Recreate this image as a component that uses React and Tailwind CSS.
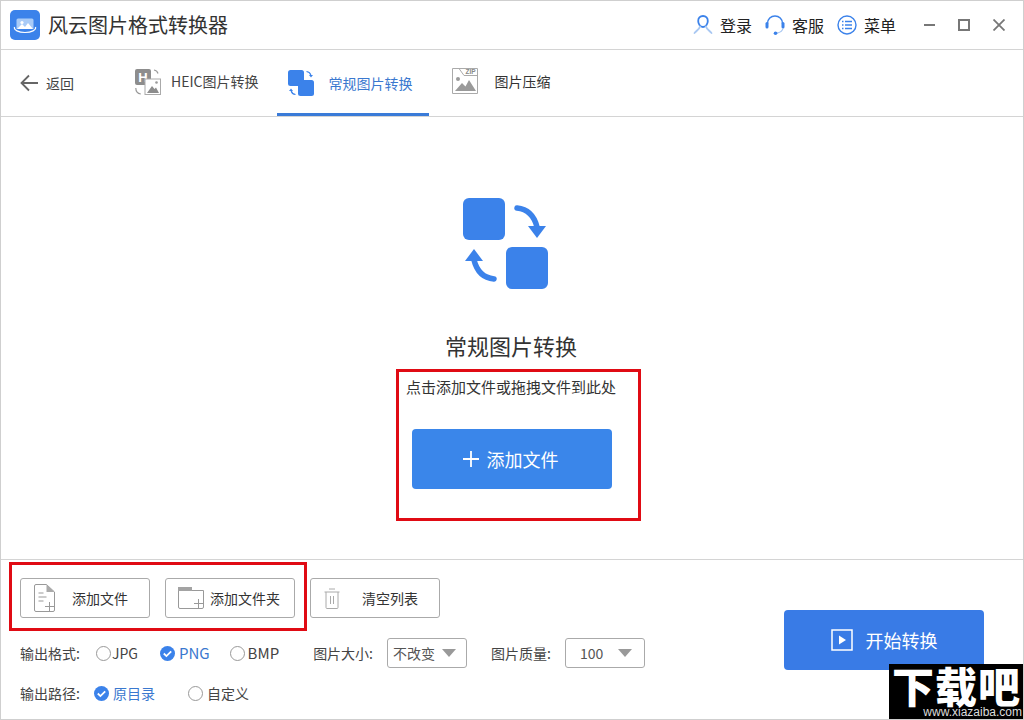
const blue = "#3b82ea";

function Logo() {
  return (
    <svg width="30" height="30" viewBox="0 0 30 30">
      <rect width="30" height="30" rx="5" fill={blue} />
      <path d="M8 8.500h14a1.500 1.500 0 0 1 1.500 1.500v9h-17v-9A1.500 1.500 0 0 1 8 8.500z" fill="#a9cbf7" />
      <circle cx="12" cy="12.500" r="1.600" fill="#fff" />
      <path d="M7 19l5-5 3 3 3-4 5 6z" fill="#fff" />
      <path d="M4.500 17c-1 3 4 5.500 10.500 5.500S26.500 20 25.500 17" fill="none" stroke="#fff" strokeWidth="1.200" />
    </svg>
  );
}

function UserIcon() {
  return (
    <svg width="20" height="22" viewBox="0 0 20 22" fill="none" strokeWidth="1.800" strokeLinecap="round">
      <path d="M10 2c-3 0-4.800 2.200-4.800 5S7 13 10 13s4.800-3.200 4.800-6S13 2 10 2z" stroke="#3b82ea" />
      <path d="M7 12.500c-.5 2.500-3 3.800-5.500 6.500M13 12.500c.5 2.500 3 3.800 5.500 6.500" stroke="#a9c8f2" />
    </svg>
  );
}

function HeadsetIcon() {
  return (
    <svg width="20" height="22" viewBox="0 0 20 22" fill="none">
      <path d="M2.500 9.500C2.500 5 6 2 10 2s7.500 3 7.500 7.500" stroke="#3b82ea" strokeWidth="1.500" />
      <rect x="0.500" y="8" width="3" height="6.500" rx="1.500" fill="#3b82ea" />
      <rect x="16.500" y="8" width="3" height="6.500" rx="1.500" fill="#3b82ea" />
      <path d="M18 14c-.5 3-3 4.500-6 5" stroke="#a9c8f2" strokeWidth="1.300" />
      <circle cx="10.500" cy="19.300" r="1.800" fill="#3b82ea" />
    </svg>
  );
}

function MenuIcon() {
  return (
    <svg width="20" height="20" viewBox="0 0 20 20" fill="none" stroke="#3b82ea">
      <circle cx="10" cy="10" r="9" strokeWidth="1.400" />
      <path d="M8 6.500h7M8 10h7M8 13.500h7M5 6.500h1.500M5 10h1.500M5 13.500h1.500" strokeWidth="1.500" />
    </svg>
  );
}

function BackArrow() {
  return (
    <svg width="18" height="18" viewBox="0 0 18 18" fill="none" stroke="#666" strokeWidth="1.800">
      <path d="M18 9H1.500M9 1.500L1.500 9 9 16.500" />
    </svg>
  );
}

function HeicIcon() {
  return (
    <svg width="26" height="26" viewBox="0 0 26 26" fill="none">
      <rect x="0" y="0" width="16" height="16" rx="2" fill="#8d8d8d" />
      <text x="8" y="13" textAnchor="middle" fontSize="13" fontWeight="700" fill="#fff" fontFamily="Liberation Sans, sans-serif">H</text>
      <path d="M19 1c2 .3 3.500 1.500 4 3.500M.8 19c0 3 1.500 5.500 5 6" stroke="#999" strokeWidth="1.200" />
      <rect x="10" y="10" width="15.500" height="15.500" stroke="#aaa" strokeWidth="1" fill="#fff" />
      <path d="M12 24l5-7 2.500 3 1.500-1.500 3 5.500z" fill="#8d8d8d" />
      <circle cx="21.500" cy="13.500" r="1.300" fill="#999" />
    </svg>
  );
}

function RegularIcon() {
  return (
    <svg width="26" height="26" viewBox="0 0 26 26" fill="none">
      <rect x="0" y="0" width="16" height="16" rx="2.500" fill={blue} />
      <rect x="10" y="10" width="16" height="16" rx="2.500" fill={blue} />
      <path d="M18.500 1.500c2 .3 3.800 1.500 4.300 3.500" stroke={blue} strokeWidth="1.200" />
      <path d="M21 5h4l-2 2.500z" fill={blue} />
      <path d="M7.500 24.500c-2-.3-3.800-1.500-4.300-3.500" stroke={blue} strokeWidth="1.200" />
      <path d="M1 21h4l-2-2.500z" fill={blue} />
    </svg>
  );
}

function ZipIcon() {
  return (
    <svg width="26" height="26" viewBox="0 0 26 26" fill="none">
      <path d="M.5.500h25v25H.5z" stroke="#aaa" fill="#fff" />
      <path d="M7 .500l5 7h13.500" stroke="#aaa" />
      <text x="18.500" y="6.300" textAnchor="middle" fontSize="6.500" fontWeight="700" fill="#888" fontFamily="Liberation Sans, sans-serif">ZIP</text>
      <circle cx="6" cy="11" r="2" fill="#9a9a9a" />
      <path d="M3 23l7-8 3.500 3.500L17 12l7 11z" fill="#9a9a9a" />
    </svg>
  );
}

function ConvertIcon() {
  return (
    <svg width="100" height="91" viewBox="0 0 100 91" fill="none">
      <rect x="1" y="0" width="42" height="42" rx="6" fill={blue} />
      <rect x="44" y="49" width="42" height="42" rx="6" fill={blue} />
      <path d="M55 10c10 1 17 7 20 19" stroke={blue} strokeWidth="5.500" strokeLinecap="round" />
      <path d="M66 28h18l-9 12z" fill={blue} />
      <path d="M32 81c-10-1-17-7-20-19" stroke={blue} strokeWidth="5.500" strokeLinecap="round" />
      <path d="M3 63h18l-9-12z" fill={blue} />
    </svg>
  );
}

function FileIcon() {
  return (
    <svg width="22" height="28" viewBox="0 0 22 28" fill="none" stroke="#999">
      <path d="M12.500.500H2A1.500 1.500 0 0 0 .5 2v24A1.500 1.500 0 0 0 2 27.500h17a1.500 1.500 0 0 0 1.500-1.500V8z" fill="#fff" />
      <path d="M12.500.500L20.500 8h-8z" fill="#aaa" stroke="none" />
      <path d="M4.500 9h5M4.500 13h8M4.500 17h5M11 22.500h9M15.500 18v9" />
    </svg>
  );
}

function FolderIcon() {
  return (
    <svg width="26" height="22" viewBox="0 0 26 22" fill="none" stroke="#999">
      <path d="M.5 3.500h25V20a1.500 1.500 0 0 1-1.500 1.500H2A1.500 1.500 0 0 1 .5 20z" fill="#fff" />
      <path d="M0 0h14v4H0z" fill="#a3a3a3" stroke="none" />
      <path d="M16 16.500h9M20.500 12v9" />
    </svg>
  );
}

function TrashIcon() {
  return (
    <svg width="16" height="21" viewBox="0 0 16 21" fill="none" stroke="#aaa">
      <path d="M.5 4h15M5 1h6M2 4v15.500a1 1 0 0 0 1 1h10a1 1 0 0 0 1-1V4M6.500 8v8M9.500 8v8" />
    </svg>
  );
}

function Radio({ checked }) {
  if (checked) {
    return (
      <svg width="15" height="15" viewBox="0 0 15 15" className="shrink-0">
        <circle cx="7.500" cy="7.500" r="7.500" fill={blue} />
        <path d="M3.800 7.500l2.600 2.600 4.800-4.800" fill="none" stroke="#fff" strokeWidth="1.800" />
      </svg>
    );
  }
  return <div className="h-[15px] w-[15px] shrink-0 rounded-full border border-[#999] bg-white" />;
}

function ToolButton({ icon, label, textLeft, iconLeft }) {
  return (
    <div className="flex h-10 w-[130px] items-center rounded-[3px] border border-[#aaa] bg-white text-[14px] text-[#333]">
      <span className={iconLeft}>{icon}</span>
      <span className={textLeft}>{label}</span>
    </div>
  );
}

function Select({ value, textClass, arrowClass }) {
  return (
    <div className="flex h-[30px] w-20 items-center rounded-[3px] border border-[#aaa] bg-white text-[14px] text-[#555]">
      <span className={textClass}>{value}</span>
      <span className={`h-0 w-0 border-x-[7px] border-t-[8px] border-x-transparent border-t-[#999] ${arrowClass}`} />
    </div>
  );
}

export default function App() {
  return (
    <div
      className="relative flex h-[720px] w-[1024px] flex-col overflow-hidden border border-[#cfcfcf] bg-white text-[#333]"
      style={{ fontFamily: '"Noto Sans CJK SC", "Liberation Sans", sans-serif' }}
    >
      {/* Title bar */}
      <div className="flex h-[49px] shrink-0 items-center border-b border-[#d4d4d4] pl-[9px]">
        <Logo />
        <span className="ml-2 text-[20px] text-[#333]">风云图片格式转换器</span>
        <div className="ml-auto flex items-center text-[16px] text-[#222]">
          <UserIcon />
          <span className="ml-[7px]">登录</span>
          <span className="ml-[13px]"><HeadsetIcon /></span>
          <span className="ml-[7px]">客服</span>
          <span className="ml-[13px]"><MenuIcon /></span>
          <span className="ml-[7px]">菜单</span>
          <span className="ml-[28px] h-0.5 w-[11px] bg-[#777]" />
          <span className="ml-[23px] h-[12px] w-[12px] border-2 border-[#777]" />
          <svg className="ml-[23px] mr-[18px]" width="12" height="12" viewBox="0 0 12 12" stroke="#777" strokeWidth="1.800">
            <path d="M.5.500l11 11M11.500.500l-11 11" />
          </svg>
        </div>
      </div>

      {/* Tabs */}
      <div className="flex h-[67px] shrink-0 items-center border-b border-[#d4d4d4] text-[14px]">
        <div className="ml-[19px] flex items-center text-[#444]">
          <BackArrow />
          <span className="ml-2">返回</span>
        </div>
        <div className="ml-[61px] flex items-center pb-[3px]">
          <HeicIcon />
          <span className="ml-[10px] text-[#444]">HEIC图片转换</span>
        </div>
        <div className="ml-[19px] flex h-full w-[152px] items-center border-b-[3px] border-[#3a7bd8] pl-[11px] pt-[3px]">
          <RegularIcon />
          <span className="ml-[14px] text-[#3a78cf]">常规图片转换</span>
        </div>
        <div className="ml-[23px] flex items-center pb-[4px]">
          <ZipIcon />
          <span className="ml-4 text-[#333]">图片压缩</span>
        </div>
      </div>

      {/* Drop area */}
      <div className="flex flex-1 flex-col items-center border-b border-[#d4d4d4] pt-[81px]">
        <ConvertIcon />
        <h1 className="mr-[2px] mt-[40px] text-[22px] font-normal leading-[32px] text-[#333]">常规图片转换</h1>
        <div className="ml-[13px] mt-[8px] flex h-[152px] w-[245px] flex-col border-[3px] border-[#e00b14]">
          <p className="ml-[7px] mt-[1px] text-[15px] leading-[28px] text-[#333]">点击添加文件或拖拽文件到此处</p>
          <button className="ml-[13px] mt-[28px] flex h-[60px] w-[200px] items-center justify-center gap-[7px] rounded-[4px] bg-[#3a86ea] pr-[4px] text-[18px] text-white">
            <svg width="18" height="18" viewBox="0 0 18 18" stroke="#fff" strokeWidth="1.800">
              <path d="M9 1v16M1 9h16" />
            </svg>
            添加文件
          </button>
        </div>
      </div>

      {/* Bottom controls */}
      <div className="flex h-[159px] shrink-0">
        <div className="w-[783px] pl-2 pt-[2px]">
          <div className="flex items-start">
            <div className="flex h-[69px] w-[298px] gap-[15px] border-[3px] border-[#e00b14] pl-2 pt-[13px]">
              <ToolButton icon={<FileIcon />} label="添加文件" iconLeft="ml-[13px]" textLeft="ml-4" />
              <ToolButton icon={<FolderIcon />} label="添加文件夹" iconLeft="ml-[12px]" textLeft="ml-[6px]" />
            </div>
            <div className="ml-[3px] mt-4">
              <ToolButton icon={<TrashIcon />} label="清空列表" iconLeft="ml-[13px]" textLeft="ml-[22px]" />
            </div>
          </div>

          <div className="ml-[11px] mt-[7px] flex h-[30px] items-center text-[14px] text-[#444]">
            <span>输出格式:</span>
            <span className="ml-4"><Radio /></span>
            <span className="ml-[1px]">JPG</span>
            <span className="ml-[22px]"><Radio checked /></span>
            <span className="ml-1 text-[15px] text-[#3a78cf]">PNG</span>
            <span className="ml-5"><Radio /></span>
            <span className="ml-[3px] text-[15px]">BMP</span>
            <span className="ml-[34px]">图片大小:</span>
            <span className="ml-[14px]"><Select value="不改变" textClass="ml-[5px]" arrowClass="ml-[7px]" /></span>
            <span className="ml-6">图片质量:</span>
            <span className="ml-[14px]"><Select value="100" textClass="ml-[14px]" arrowClass="ml-[15px]" /></span>
          </div>

          <div className="ml-[11px] mt-[10px] flex h-[30px] items-center text-[14px] text-[#444]">
            <span>输出路径:</span>
            <span className="ml-[14px]"><Radio checked /></span>
            <span className="ml-1 text-[#3a78cf]">原目录</span>
            <span className="ml-[33px]"><Radio /></span>
            <span className="ml-1">自定义</span>
          </div>
        </div>

        <div className="pt-[50px]">
          <button className="flex h-[60px] w-[200px] items-center justify-center gap-[13px] rounded-[4px] bg-[#397be6] text-[18px] text-white">
            <svg width="22" height="22" viewBox="0 0 22 22" fill="none">
              <rect x="1" y="1" width="20" height="20" stroke="#fff" strokeWidth="1.500" />
              <path d="M8 6.500l7 4.500-7 4.500z" fill="#fff" />
            </svg>
            开始转换
          </button>
        </div>
      </div>

      {/* Watermark */}
      <div className="absolute bottom-[-1px] right-[-1px] flex h-[56px] w-[135px] flex-col items-center bg-black text-white">
        <span className="text-[42px] font-black leading-[41px] tracking-[1px]">下载吧</span>
        <span className="self-end pr-[2px] text-[12px] leading-[14px] text-[#ddd]" style={{ fontFamily: '"Liberation Sans", sans-serif' }}>www.xiazaiba.com</span>
      </div>
    </div>
  );
}
